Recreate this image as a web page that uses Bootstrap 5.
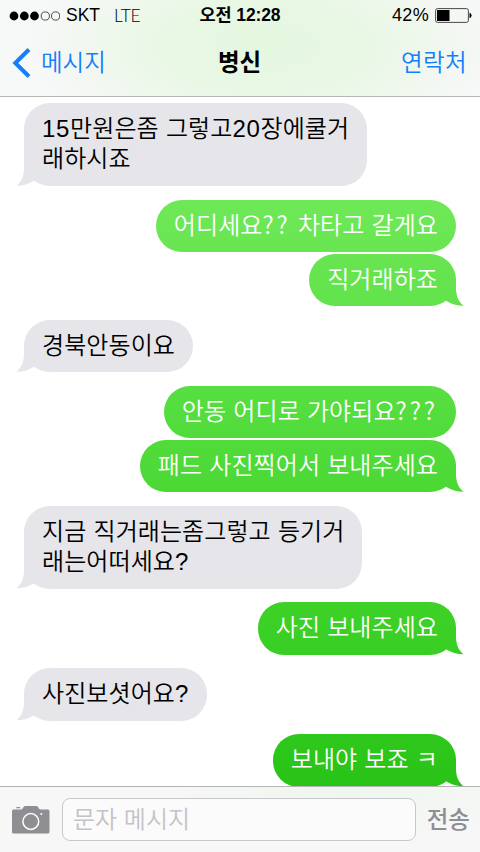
<!DOCTYPE html>
<html lang="ko">
<head>
  <meta charset="UTF-8">
  <title>메시지</title>
  <meta name="viewport" content="width=device-width, initial-scale=1.0">
  <link href="https://cdn.jsdelivr.net/npm/bootstrap@5.3.0/dist/css/bootstrap.min.css" rel="stylesheet">
  <style>
    body {
      font-family: "Liberation Sans", "Noto Sans CJK KR", sans-serif;
      color: #000;
      background: #fff;
    }
    svg { display: block; flex: none; }
    .top-area {
      height: 97px;
      border-bottom: 1px solid #b5b8b5;
      background: radial-gradient(ellipse 235px 105px at 265px 45px, #e4f7df 0%, #e9f7e5 45%, #f7f8f8 100%);
    }
    .status-row {
      height: 31px;
      padding: 0 8px 0 9px;
      font-size: 17.5px;
      line-height: 31px;
    }
    .carrier { margin-left: 6px; }
    .network {
      font-family: Lato, "Liberation Sans", sans-serif;
      font-weight: 300;
      font-size: 17.5px;
      letter-spacing: -.4px;
      margin-left: 14px;
    }
    .clock { font-size: 17.5px; font-weight: 700; letter-spacing: -.1px; padding-right: 1px; }
    .percent { font-size: 18px; letter-spacing: .3px; margin-right: 6px; }
    .title-row {
      height: 65px;
      padding: 0 13px 0 12px;
      font-size: 23.5px;
      line-height: 65px;
    }
    .title-row a { color: #147efb; font-weight: 350; }
    .title-row .back-link { height: 64px; gap: 10px; }
    .contact-link { letter-spacing: .4px; }
    .chat-title { font-size: 23.5px; font-weight: 700; }
    .messages {
      height: 689px;
      padding: 6px 24px 0;
      gap: 13.5px;
    }
    .bubble-group { gap: 1.5px; }
    .bubble {
      position: relative;
      padding: 11px 18px 11.5px;
      border-radius: 26px;
      font-size: 24px;
      font-weight: 350;
      line-height: 30px;
      letter-spacing: .08px;
      word-spacing: .4px;
      white-space: nowrap;
    }
    .bubble.two-line { padding-bottom: 12px; }
    .latin { letter-spacing: .7px; }
    .incoming { background: #e5e5ea; }
    /* one gradient runs behind the whole thread, each bubble shows its part */
    .outgoing, .outgoing.tail::after {
      background: linear-gradient(#6fe858 200px, #52dc3c 430px, #3bd026 630px, #29c317 786px) fixed;
    }
    .outgoing { color: #fff; }
    .outgoing .latin {
      font-family: "Noto Sans CJK KR", sans-serif;
      line-height: 1;
      letter-spacing: 2.9px;
    }
    .tail::after {
      content: "";
      position: absolute;
      bottom: 0;
      width: 26px;
      height: 28px;
      clip-path: path("M18 0V9C18 17 19.500 22.500 25.500 27.800C19 27.800 13 26 7.500 22.500L4 18V0Z");
    }
    .outgoing.tail::after { right: -8px; }
    .incoming.tail::after { left: -8px; background: #e5e5ea; transform: scaleX(-1); }
    .compose {
      height: 66px;
      padding: 0 10px 0 12px;
      border-top: 1px solid #b3b5b3;
      background: radial-gradient(ellipse 190px 60px at 350px 0, #eff6ed, #f7f7f7);
    }
    .compose .form-control {
      height: 43px;
      margin-left: 12px;
      padding: 0 10px;
      border: 1px solid #c7c8cc;
      border-radius: 8px;
      background: #fbfbfb;
      font-size: 24px;
      font-weight: 350;
    }
    .compose .form-control::placeholder { color: #c3c3c7; }
    .compose .send {
      margin-left: 11px;
      color: #8e8e93;
      font-size: 23.5px;
      font-weight: 500;
      line-height: 64px;
    }
  </style>
</head>
<body>
  <div class="vh-100 d-flex flex-column overflow-hidden">
    <header class="top-area flex-shrink-0">
      <div class="status-row row g-0">
        <div class="col d-flex align-items-center">
          <svg width="51" height="10" viewBox="0 0 51 10">
            <circle cx="5" cy="5" r="4.4"/>
            <circle cx="15.3" cy="5" r="4.4"/>
            <circle cx="25.5" cy="5" r="4.4"/>
            <g fill="none" stroke="#222" stroke-width=".8">
              <circle cx="36.3" cy="5" r="4.1"/>
              <circle cx="46.6" cy="5" r="4.1"/>
            </g>
          </svg>
          <span class="carrier">SKT</span>
          <span class="network">LTE</span>
        </div>
        <div class="col-auto clock">오전 12:28</div>
        <div class="col d-flex align-items-center justify-content-end">
          <span class="percent">42%</span>
          <svg width="37" height="15" viewBox="0 0 37 15">
            <rect x=".6" y=".6" width="32.8" height="13.8" rx="2" fill="none" stroke="#333" stroke-width=".9"/>
            <rect x="2" y="2" width="12.5" height="11"/>
            <path d="M34.5 4.8Q36.6 5.3 36.6 7.5T34.5 10.2Z"/>
          </svg>
        </div>
      </div>
      <nav class="title-row row g-0">
        <div class="col">
          <a href="#" class="back-link d-flex align-items-center text-decoration-none">
            <svg width="19" height="30" viewBox="0 0 19 30">
              <path d="M17 1.500L3.300 15L17 28.500" fill="none" stroke="#147efb" stroke-width="4"/>
            </svg>
            메시지
          </a>
        </div>
        <div class="col-auto chat-title">병신</div>
        <div class="col text-end"><a href="#" class="contact-link text-decoration-none">연락처</a></div>
      </nav>
    </header>

    <main class="messages d-flex flex-column overflow-hidden flex-shrink-0">
      <div class="bubble-group d-flex flex-column align-items-start">
        <div class="bubble incoming tail two-line"><span class="latin">15</span>만원은좀 그렇고<span class="latin">20</span>장에쿨거<br>래하시죠</div>
      </div>
      <div class="bubble-group d-flex flex-column align-items-end">
        <div class="bubble outgoing">어디세요<span class="latin">??</span> 차타고 갈게요</div>
        <div class="bubble outgoing tail">직거래하죠</div>
      </div>
      <div class="bubble-group d-flex flex-column align-items-start">
        <div class="bubble incoming tail">경북안동이요</div>
      </div>
      <div class="bubble-group d-flex flex-column align-items-end">
        <div class="bubble outgoing">안동 어디로 가야되요<span class="latin">???</span></div>
        <div class="bubble outgoing tail">패드 사진찍어서 보내주세요</div>
      </div>
      <div class="bubble-group d-flex flex-column align-items-start">
        <div class="bubble incoming tail two-line">지금 직거래는좀그렇고 등기거<br>래는어떠세요?</div>
      </div>
      <div class="bubble-group d-flex flex-column align-items-end">
        <div class="bubble outgoing tail">사진 보내주세요</div>
      </div>
      <div class="bubble-group d-flex flex-column align-items-start">
        <div class="bubble incoming tail">사진보셧어요<span class="latin">?</span></div>
      </div>
      <div class="bubble-group d-flex flex-column align-items-end">
        <div class="bubble outgoing tail">보내야 보죠 ㅋ</div>
      </div>
    </main>

    <footer class="compose d-flex align-items-center flex-shrink-0">
      <svg width="38" height="28" viewBox="0 0 38 28">
        <path d="M4 2.300Q4 1 5.500 1H7Q8.500 1 8.500 2.300Z" fill="#8e8e93"/>
        <path d="M1.500 3.500H8.500Q10.300 3.500 11 2L11.500 1Q12 0 13.500 0H24Q25.500 0 26 1L26.700 2.300Q27.400 3.500 29 3.500H36Q37.500 3.500 37.500 5V26Q37.500 27.500 36 27.500H1.500Q0 27.500 0 26V5Q0 3.500 1.500 3.500Z" fill="#8e8e93"/>
        <circle cx="18.800" cy="15.500" r="7.900" fill="none" stroke="#fff" stroke-width="1.500"/>
        <circle cx="29.300" cy="8" r="1" fill="#fff"/>
      </svg>
      <input type="text" class="form-control flex-fill" placeholder="문자 메시지">
      <div class="send flex-shrink-0">전송</div>
    </footer>
  </div>
  <script src="https://cdn.jsdelivr.net/npm/bootstrap@5.3.0/dist/js/bootstrap.bundle.min.js"></script>
</body>
</html>
